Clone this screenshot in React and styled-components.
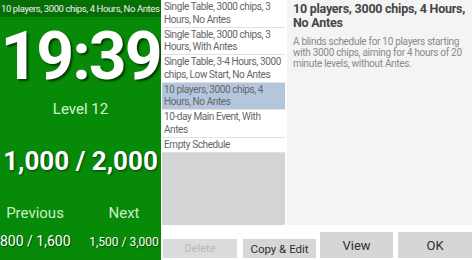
import React from "react";
import styled, { createGlobalStyle } from "styled-components";

const Global = createGlobalStyle`
  html, body { margin: 0; padding: 0; background: #ffffff; }
  body { font-family: Roboto, "Noto Sans", sans-serif; }
`;

const Screen = styled.div`
  display: flex;
  width: 474px;
  height: 260px;
  overflow: hidden;
  background: #ffffff;
`;

const Clock = styled.div`
  width: 161px;
  flex: none;
  background: #078a07;
  display: flex;
  flex-direction: column;
  align-items: center;
  overflow: hidden;
`;

const ClockHeader = styled.div`
  align-self: stretch;
  height: 17px;
  line-height: 17px;
  background: #056f05;
  color: #f0f0f0;
  font-size: 9.5px;
  letter-spacing: -0.4px;
  white-space: nowrap;
  overflow: hidden;
  padding-left: 1px;
`;

const Time = styled.div`
  margin-top: 7px;
  font-size: 66px;
  line-height: 1;
  font-weight: 700;
  letter-spacing: -2px;
  color: #ffffff;
  white-space: nowrap;
  text-shadow: 2px 2px 2px rgba(0, 0, 0, 0.55);
`;

const Level = styled.div`
  margin-top: 12px;
  font-size: 15px;
  line-height: 1;
  color: #d4f5d4;
`;

const Blinds = styled.div`
  margin-top: 31px;
  font-size: 26px;
  line-height: 1;
  font-weight: 700;
  color: #ffffff;
  white-space: nowrap;
  text-shadow: 1px 1px 2px rgba(0, 0, 0, 0.55);
`;

const Pair = styled.div`
  align-self: stretch;
  display: grid;
  grid-template-columns: 70px 70px;
  justify-content: space-between;
  align-items: baseline;
  padding-right: 2px;
  margin-top: ${(p) => p.$mt}px;
`;

const PairCell = styled.div`
  text-align: center;
  white-space: nowrap;
  line-height: 1;
  font-size: ${(p) => p.$size}px;
  color: ${(p) => p.$color};
  text-shadow: ${(p) => (p.$shadow ? "1px 1px 1px rgba(0,0,0,0.5)" : "none")};
`;

const Side = styled.div`
  flex: 1;
  display: flex;
  flex-direction: column;
`;

const TopArea = styled.div`
  height: 225px;
  flex: none;
  display: flex;
  gap: 2px;
  padding-left: 1px;
  padding-right: 2px;
`;

const List = styled.div`
  width: 123px;
  flex: none;
  background: #d4d4d4;
  display: flex;
  flex-direction: column;
`;

const Item = styled.div`
  background: ${(p) => (p.$selected ? "#b3c6de" : "#ffffff")};
  color: #666666;
  font-size: 10px;
  letter-spacing: -0.4px;
  line-height: 12.5px;
  padding: 1px 0 0.5px 2px;
  border-bottom: 1px solid #e2e2e2;
  overflow: hidden;
`;

const ItemLine = styled.span`
  display: block;
  white-space: nowrap;
`;

const Detail = styled.div`
  flex: 1;
  background: #f4f4f4;
  padding: 2px 6px;
`;

const DetailTitle = styled.div`
  font-size: 12.5px;
  letter-spacing: -0.25px;
  line-height: 14px;
  font-weight: 700;
  color: #454545;
`;

const DetailBody = styled.div`
  margin-top: 6px;
  font-size: 10px;
  letter-spacing: -0.3px;
  line-height: 11px;
  color: #8a8a8a;
`;

const Buttons = styled.div`
  display: flex;
  align-items: flex-end;
  padding: 0 2px 2px 2px;
  flex: 1;
`;

const Button = styled.div`
  width: ${(p) => p.$w}px;
  height: ${(p) => p.$h}px;
  margin-right: ${(p) => p.$mr || 0}px;
  background: ${(p) => (p.$disabled ? "#dcdcdc" : "#d6d6d6")};
  color: ${(p) => (p.$disabled ? "#b8b8b8" : "#2f2f2f")};
  font-size: ${(p) => p.$fs}px;
  display: flex;
  align-items: center;
  justify-content: center;
  flex: none;
`;

const items = [
  { lines: ["Single Table, 3000 chips, 3", "Hours, No Antes"] },
  { lines: ["Single Table, 3000 chips, 3", "Hours, With Antes"] },
  { lines: ["Single Table, 3-4 Hours, 3000", "chips, Low Start, No Antes"] },
  { lines: ["10 players, 3000 chips, 4", "Hours, No Antes"], sel: true },
  { lines: ["10-day Main Event, With", "Antes"] },
  { lines: ["Empty Schedule"] },
];

export default function App() {
  return (
    <>
      <Global />
      <Screen>
        <Clock>
          <ClockHeader>10 players, 3000 chips, 4 Hours, No Antes</ClockHeader>
          <Time>19:39</Time>
          <Level>Level 12</Level>
          <Blinds>1,000 / 2,000</Blinds>
          <Pair $mt={32}>
            <PairCell $size={15} $color="#c9efc9">Previous</PairCell>
            <PairCell $size={15} $color="#c9efc9">Next</PairCell>
          </Pair>
          <Pair $mt={13}>
            <PairCell $size={14} $color="#ffffff" $shadow>800 / 1,600</PairCell>
            <PairCell $size={12} $color="#ffffff" $shadow>1,500 / 3,000</PairCell>
          </Pair>
        </Clock>
        <Side>
          <TopArea>
            <List>
              {items.map((it) => (
                <Item key={it.lines.join(" ")} $selected={it.sel}>
                  {it.lines.map((l) => (
                    <ItemLine key={l}>{l}</ItemLine>
                  ))}
                </Item>
              ))}
            </List>
            <Detail>
              <DetailTitle>10 players, 3000 chips, 4 Hours, No Antes</DetailTitle>
              <DetailBody>
                A blinds schedule for 10 players starting with 3000 chips, aiming for 4 hours of 20
                minute levels, without Antes.
              </DetailBody>
            </Detail>
          </TopArea>
          <Buttons>
            <Button $w={74} $h={19} $mr={6} $fs={11} $disabled>Delete</Button>
            <Button $w={73} $h={19} $mr={4} $fs={11.5}>Copy &amp; Edit</Button>
            <Button $w={73} $h={26} $mr={5} $fs={13}>View</Button>
            <Button $w={74} $h={26} $fs={13}>OK</Button>
          </Buttons>
        </Side>
      </Screen>
    </>
  );
}
